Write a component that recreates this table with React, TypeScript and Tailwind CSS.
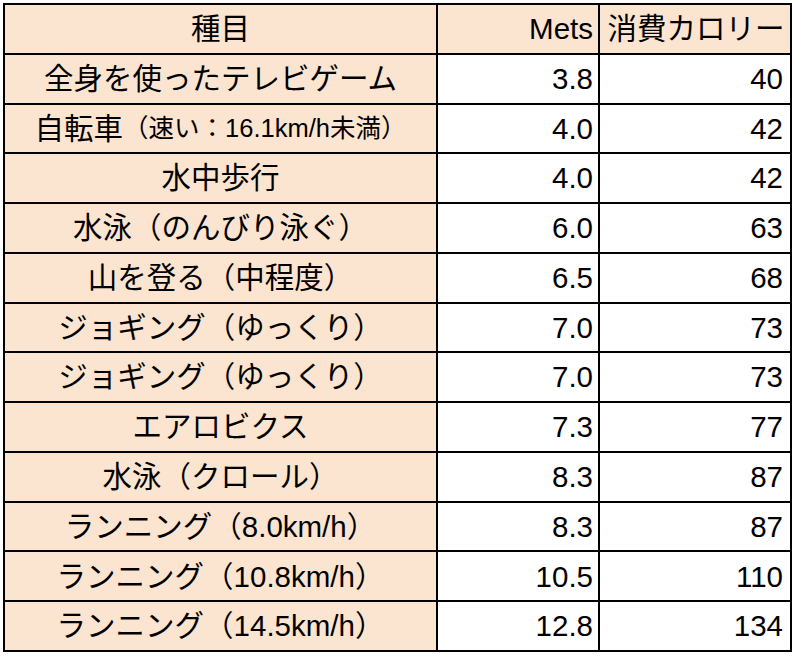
const rows: { name: React.ReactNode; mets: string; kcal: string }[] = [
  { name: '全身を使ったテレビゲーム', mets: '3.8', kcal: '40' },
  {
    name: (
      <>
        自転車<span className="text-[25.5px]">（速い：16.1km/h未満）</span>
      </>
    ),
    mets: '4.0',
    kcal: '42',
  },
  { name: '水中歩行', mets: '4.0', kcal: '42' },
  { name: '水泳（のんびり泳ぐ）', mets: '6.0', kcal: '63' },
  { name: '山を登る（中程度）', mets: '6.5', kcal: '68' },
  { name: 'ジョギング（ゆっくり）', mets: '7.0', kcal: '73' },
  { name: 'ジョギング（ゆっくり）', mets: '7.0', kcal: '73' },
  { name: 'エアロビクス', mets: '7.3', kcal: '77' },
  { name: '水泳（クロール）', mets: '8.3', kcal: '87' },
  { name: 'ランニング（8.0km/h）', mets: '8.3', kcal: '87' },
  { name: 'ランニング（10.8km/h）', mets: '10.5', kcal: '110' },
  { name: 'ランニング（14.5km/h）', mets: '12.8', kcal: '134' },
];

const peach = 'bg-[#fbe5d1]';

export default function App() {
  return (
    <div className="h-[656px] w-[796px] bg-white pl-[3px] pt-[3px] font-['Liberation_Sans','Noto_Sans_CJK_JP',sans-serif] text-[29.5px] leading-none text-black">
      <div className="grid w-[789px] grid-cols-[431px_160px_190px] auto-rows-[47.77px] gap-[2px] bg-black p-[2px]">
        {/* header */}
        <div className={`flex items-center justify-center ${peach}`}>種目</div>
        <div className={`flex items-center justify-end pr-[5px] ${peach}`}>Mets</div>
        <div className={`flex items-center justify-center pl-[2px] ${peach}`}>消費カロリー</div>

        {rows.map((r, i) => (
          <div key={i} className="contents">
            <div className={`flex items-center justify-center whitespace-nowrap ${peach}`}>{r.name}</div>
            <div className="flex items-center justify-end bg-white pr-[5px]">{r.mets}</div>
            <div className="flex items-center justify-end bg-white pr-[7px]">{r.kcal}</div>
          </div>
        ))}
      </div>
    </div>
  );
}
